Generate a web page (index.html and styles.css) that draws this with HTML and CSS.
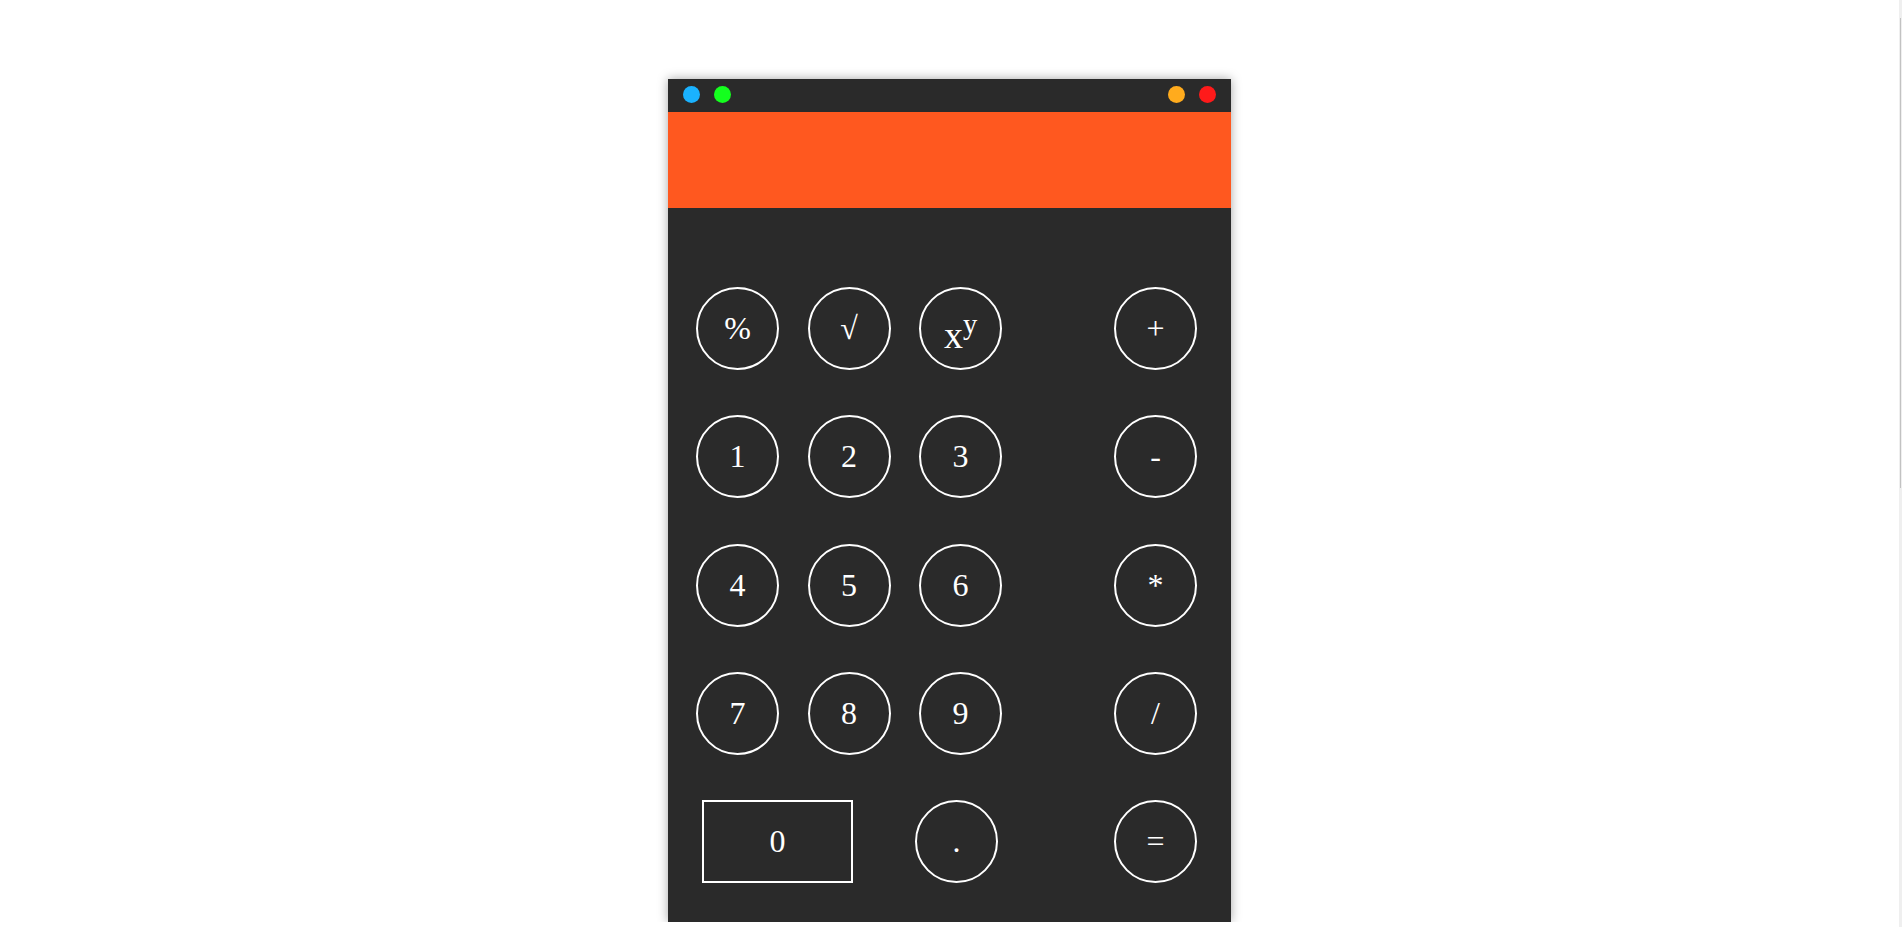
FILE: index.html
```html
<!DOCTYPE html>
<html>
<head>
<meta charset="utf-8">
<title>Calculator</title>
<link rel="stylesheet" href="styles.css">
</head>
<body>
<div class="page">
  <div class="calc">
    <div class="titlebar">
      <div class="dots">
        <span class="dot dot-blue"></span>
        <span class="dot dot-green"></span>
      </div>
      <div class="dots">
        <span class="dot dot-orange"></span>
        <span class="dot dot-red"></span>
      </div>
    </div>
    <div class="display"></div>
    <div class="keypad">
      <button class="key"><span>%</span></button>
      <button class="key"><span>√</span></button>
      <button class="key"><span class="power">x<sup>y</sup></span></button>
      <span class="spacer"></span>
      <button class="key"><span>+</span></button>

      <button class="key"><span>1</span></button>
      <button class="key"><span>2</span></button>
      <button class="key"><span>3</span></button>
      <span class="spacer"></span>
      <button class="key"><span>-</span></button>

      <button class="key"><span>4</span></button>
      <button class="key"><span>5</span></button>
      <button class="key"><span>6</span></button>
      <span class="spacer"></span>
      <button class="key"><span>*</span></button>

      <button class="key"><span>7</span></button>
      <button class="key"><span>8</span></button>
      <button class="key"><span>9</span></button>
      <span class="spacer"></span>
      <button class="key"><span>/</span></button>

      <div class="lastrow">
        <button class="key key-zero"><span>0</span></button>
        <button class="key key-point"><span>.</span></button>
        <button class="key key-equals"><span>=</span></button>
      </div>
    </div>
  </div>
</div>
<div class="scrollbar"><div class="thumb"></div></div>
</body>
</html>
```

FILE: styles.css
```css
html, body {
  margin: 0;
  padding: 0;
  background: #ffffff;
}

.page {
  display: flex;
  justify-content: center;
  padding-right: 3px;
  padding-top: 79px;
}

.calc {
  width: 563px;
  background: #2a2a2a;
  box-shadow: 0 0 10px rgba(0, 0, 0, 0.35);
  display: flex;
  flex-direction: column;
}

.titlebar {
  box-sizing: border-box;
  height: 33px;
  display: flex;
  align-items: flex-start;
  justify-content: space-between;
  padding: 7px 15px 0;
}

.dots {
  display: flex;
  gap: 14px;
}

.dot {
  width: 17px;
  height: 17px;
  border-radius: 50%;
  display: block;
}

.dot-blue { background: #1ab2ff; }
.dot-green { background: #14ff1e; }
.dot-orange { background: #ffab1d; }
.dot-red { background: #ff1a1a; }

.display {
  height: 96px;
  background: #ff581f;
}

.keypad {
  display: grid;
  grid-template-columns: 83px 83px 83px 1fr 83px;
  grid-auto-rows: 83px;
  column-gap: 28.5px;
  row-gap: 45.25px;
  padding: 79px 34px 39px 28px;
}

.key {
  box-sizing: border-box;
  width: 83px;
  height: 83px;
  margin: 0;
  padding: 0;
  border: 2px solid #ffffff;
  border-radius: 50%;
  background: transparent;
  color: #ffffff;
  font-family: "Liberation Serif", "Times New Roman", serif;
  font-size: 32px;
  line-height: normal;
  display: flex;
  align-items: center;
  justify-content: center;
  cursor: pointer;
}

.key span {
  display: block;
}

.key .power {
  font-size: 38px;
  padding-top: 8px;
}

.key sup {
  font-size: 0.75em;
  vertical-align: super;
  line-height: normal;
}

.lastrow {
  grid-column: 1 / -1;
  display: flex;
  align-items: center;
}

.key-zero {
  width: 151px;
  border-radius: 0;
  margin-left: 6px;
}

.key-point {
  margin-left: 62px;
}

.key-equals {
  margin-left: auto;
}

.scrollbar {
  position: fixed;
  top: 0;
  right: 0;
  width: 3px;
  height: 100%;
  background: #efefef;
}

.thumb {
  margin-top: 18px;
  margin-left: 1px;
  width: 1px;
  height: 470px;
  background: #c2c2c2;
}
```
